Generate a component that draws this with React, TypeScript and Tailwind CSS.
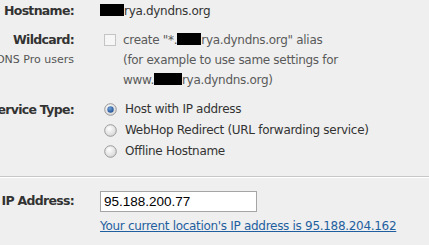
import React from "react";

const font = { fontFamily: "'DejaVu Sans', Verdana, sans-serif" };

const Redact = ({ w }: { w: number }) => (
  <span className="inline-block h-[12px] bg-black align-[-1px]" style={{ width: w }} />
);

const Radio = ({ checked }: { checked?: boolean }) => (
  <svg width="13" height="13" viewBox="0 0 13 13" className="shrink-0">
    <defs>
      <radialGradient id="rg" cx="40%" cy="35%" r="70%">
        <stop offset="0%" stopColor="#ffffff" />
        <stop offset="100%" stopColor="#d4d4d4" />
      </radialGradient>
      <radialGradient id="dot" cx="40%" cy="35%" r="70%">
        <stop offset="0%" stopColor="#6f9fd8" />
        <stop offset="100%" stopColor="#1f4f8f" />
      </radialGradient>
    </defs>
    <circle cx="6.5" cy="6.5" r="5.8" fill="url(#rg)" stroke="#9a9a9a" strokeWidth="1" />
    {checked && <circle cx="6.5" cy="6.5" r="3.2" fill="url(#dot)" />}
  </svg>
);

const Label = ({ children }: { children: React.ReactNode }) => (
  <div className="w-[74px] shrink-0 flex justify-end whitespace-nowrap font-bold text-[12.5px] tracking-[-0.7px] text-[#333]">
    {children}
  </div>
);

export default function App() {
  return (
    <div
      className="w-[429px] h-[245px] overflow-hidden bg-[#efefef] text-[12px] tracking-[-0.3px] leading-[20px] text-[#5a5a5a]"
      style={font}
    >
      <div className="pt-[1px]">
        <div className="flex gap-[26px]">
          <Label>Hostname:</Label>
          <div className="text-[#333] whitespace-nowrap">
            <Redact w={24} />rya.dyndns.org
          </div>
        </div>

        <div className="flex gap-[26px] mt-[9px]">
          <div className="w-[74px] shrink-0 flex flex-col items-end">
            <Label>Wildcard:</Label>
            <div className="whitespace-nowrap text-[11px] tracking-normal text-[#555]">for DynDNS Pro users</div>
          </div>
          <div className="flex gap-[7px] pl-[4px]">
            <span className="mt-[4px] w-[12px] h-[12px] border border-[#c4c4c4] bg-[#f6f6f6] shrink-0" />
            <div className="whitespace-nowrap">
              <div>
                create "*.<Redact w={24} />rya.dyndns.org" alias
              </div>
              <div>(for example to use same settings for</div>
              <div>
                www.<Redact w={28} />rya.dyndns.org)
              </div>
            </div>
          </div>
        </div>

        <div className="flex gap-[26px] mt-[9px] leading-[21px]">
          <Label>Service Type:</Label>
          <div className="flex flex-col text-[#333]">
            <label className="flex items-center gap-[8px] pl-[4px]">
              <Radio checked />
              Host with IP address
            </label>
            <label className="flex items-center gap-[8px] pl-[4px]">
              <Radio />
              WebHop Redirect (URL forwarding service)
            </label>
            <label className="flex items-center gap-[8px] pl-[4px]">
              <Radio />
              Offline Hostname
            </label>
          </div>
        </div>

        <div className="mt-[14px] border-t border-[#c6c6c6] border-b border-b-white" />

        <div className="flex gap-[26px] mt-[13px]">
          <Label>IP Address:</Label>
          <div className="flex flex-col">
            <input
              defaultValue="95.188.200.77"
              className="w-[157px] h-[21px] border border-[#a5a5a5] bg-white px-[3px] text-[13.5px] tracking-normal text-black outline-none"
              style={{ fontFamily: "'Liberation Sans', Arial, sans-serif" }}
            />
            <a href="#" className="text-[#1f5fa0] underline whitespace-nowrap leading-[28px]">
              Your current location's IP address is 95.188.204.162
            </a>
          </div>
        </div>
      </div>
    </div>
  );
}
